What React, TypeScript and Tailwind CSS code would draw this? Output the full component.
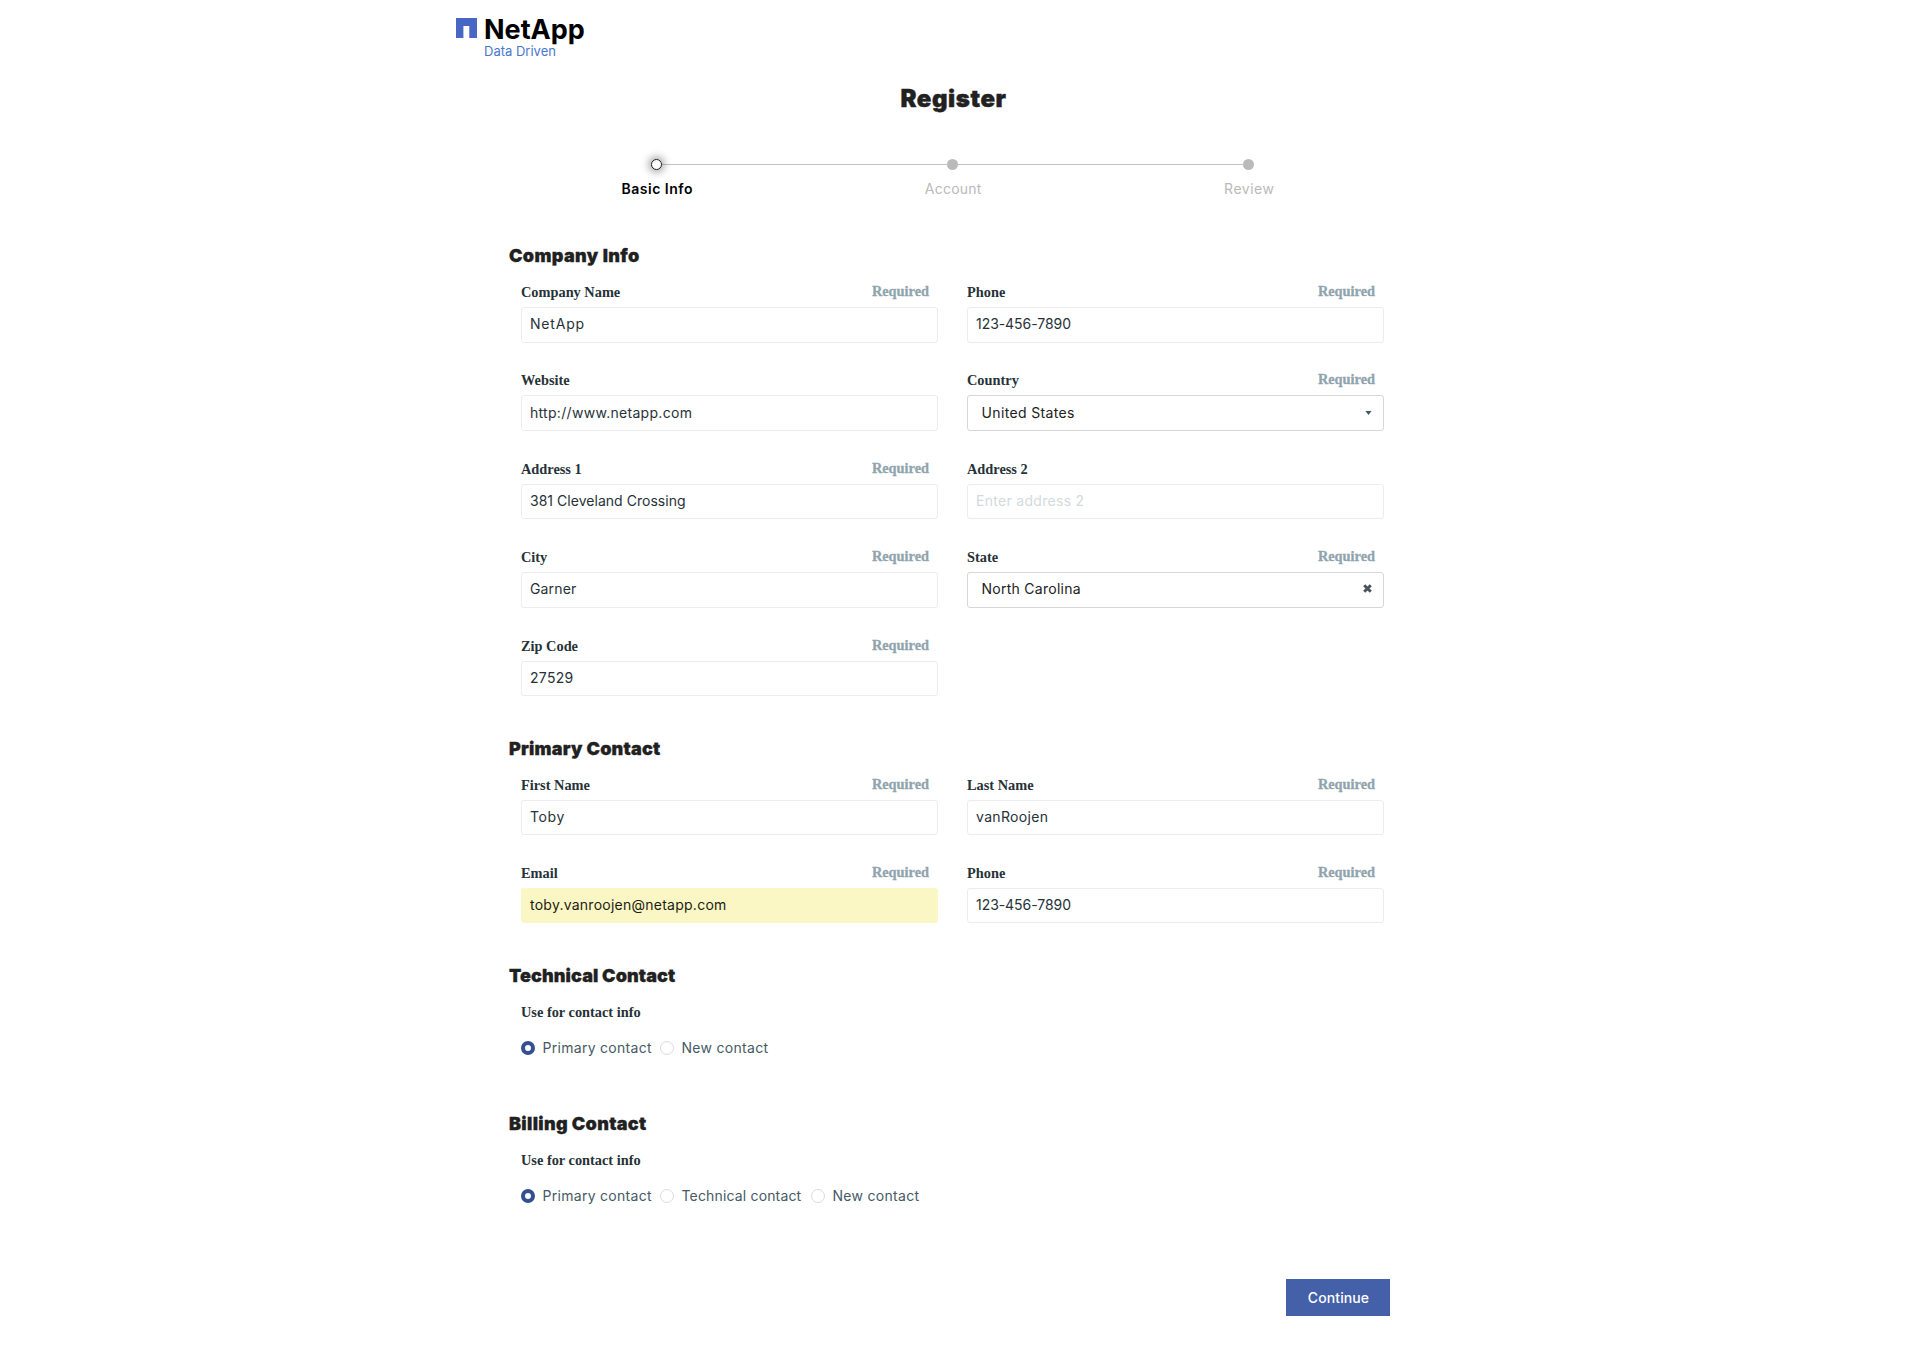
type FieldProps = {
  label: string
  value: string
  tracking?: string
  required?: boolean
  kind?: 'input' | 'select' | 'clearable' | 'placeholder' | 'autofill'
}

const boxStyles = {
  input: 'border-[#ebeced] bg-white pl-[8px] text-[#263238]',
  placeholder: 'border-[#ebeced] bg-white pl-[8px] text-[#d3dade]',
  autofill: 'border-[#faf7c4] bg-[#faf7c4] pl-[8px] text-[#1c1c14]',
  select: 'border-[#d5d7d8] bg-white pl-[13.5px] text-[#212121]',
  clearable: 'border-[#d5d7d8] bg-white pl-[13.5px] text-[#212121]',
}

function Label({ children }: { children: string }) {
  return (
    <span className="font-['Liberation_Serif',serif] text-[14.35px] leading-5 font-bold text-[#263238]">{children}</span>
  )
}

function Field({ label, value, tracking = 'tracking-[0.3px]', required = true, kind = 'input' }: FieldProps) {
  return (
    <div className="h-[88.4px]">
      <div className="flex h-5 justify-between pr-[9px]">
        <Label>{label}</Label>
        {required && (
          <span className="-mt-px font-['Liberation_Serif',serif] text-[14.35px] leading-5 font-bold text-[#90a4ae] [-webkit-text-stroke:0.3px_#90a4ae]">
            Required
          </span>
        )}
      </div>
      <div
        className={`mt-[5px] flex h-[35.6px] items-center justify-between rounded-[3px] border pr-[11px] pb-px text-sm ${boxStyles[kind]}`}
      >
        <span className={tracking}>{value}</span>
        {kind === 'select' && (
          <svg className="h-[4px] w-[7px]" viewBox="0 0 7 4" fill="#455a64">
            <path d="M0.4 0h6.2L3.5 4z" />
          </svg>
        )}
        {kind === 'clearable' && (
          <svg className="-mt-px h-[9px] w-[9px]" viewBox="0 0 9 9" stroke="#4a5559" strokeWidth="2.9">
            <path d="M1.2 1.2 7.8 7.8M7.8 1.2 1.2 7.8" />
          </svg>
        )}
      </div>
    </div>
  )
}

function Heading({ children, tracking }: { children: string; tracking: string }) {
  return (
    <h2 className={`ml-[-12px] h-6 text-[18px] leading-6 font-black text-[#212121] [-webkit-text-stroke:0.3px_#212121] ${tracking}`}>
      {children}
    </h2>
  )
}

function Radio({ label, checked = false, tracking, width }: { label: string; checked?: boolean; tracking: string; width: string }) {
  return (
    <label className={`flex h-5 shrink-0 items-center text-sm text-[#455a64] ${width}`}>
      <span
        className={
          checked
            ? 'size-[14px] shrink-0 rounded-full border-[4px] border-[#34508f] bg-white'
            : 'size-[14px] shrink-0 rounded-full border border-[#d9dcde] bg-white'
        }
      />
      <span className={`ml-[7.5px] whitespace-nowrap ${tracking}`}>{label}</span>
    </label>
  )
}

function Step({ label, active = false, tracking }: { label: string; active?: boolean; tracking: string }) {
  return (
    <div className="flex w-[296px] flex-col items-center">
      <span
        className={
          active
            ? 'relative size-[11px] rounded-full border-[1.5px] border-[#222] bg-white shadow-[0_0_8px_2px_rgba(0,0,0,0.4)]'
            : 'relative size-[11px] rounded-full bg-[#bababa]'
        }
      />
      <span className={`mt-[9px] pl-[1.5px] text-sm leading-5 ${tracking} ${active ? 'font-semibold text-black' : 'text-[#bababa]'}`}>
        {label}
      </span>
    </div>
  )
}

export default function App() {
  return (
    <div className="h-[1349px] overflow-hidden bg-white font-['Inter',sans-serif]">
      <header className="ml-[456px] flex h-[60px] pt-[18px]">
        <svg className="h-5 w-[21px]" viewBox="0 0 21 20" fill="#4867c5">
          <path d="M0 0H21V20H13.3V8H7.4V20H0z" />
        </svg>
        <div className="-mt-[2px] ml-[7px]">
          <div className="h-[27px] text-[27px] leading-[28px] font-bold text-black">NetApp</div>
          <div className="text-[13px] leading-4 text-[#4878cf]">Data Driven</div>
        </div>
      </header>

      <main className="ml-[521px] w-[863px]">
        <h1 className="mt-[24px] h-8 pl-[2px] text-center text-2xl leading-[30px] font-black tracking-[0.6px] text-[#212121] [-webkit-text-stroke:0.4px_#212121]">
          Register
        </h1>

        <div className="mt-[43px] ml-[-12.5px] h-[85px] w-[888px]">
          <div className="mx-[148px] mb-[-1px] h-px translate-y-[5px] bg-[#c3c3c3]" />
          <div className="flex">
            <Step label="Basic Info" active tracking="tracking-[0.5px]" />
            <Step label="Account" tracking="tracking-[0.23px]" />
            <Step label="Review" tracking="tracking-[0.5px]" />
          </div>
        </div>

        <section className="h-[492.5px]">
          <Heading tracking="tracking-[0.38px]">Company Info</Heading>
          <div className="mt-[14px] grid grid-cols-2 gap-x-[29px]">
            <Field label="Company Name" value="NetApp" tracking="tracking-[0.8px]" />
            <Field label="Phone" value="123-456-7890" tracking="tracking-[-0.05px]" />
            <Field label="Website" value="http://www.netapp.com" required={false} />
            <Field label="Country" value="United States" kind="select" tracking="tracking-[0.35px]" />
            <Field label="Address 1" value="381 Cleveland Crossing" tracking="tracking-[0.03px]" />
            <Field label="Address 2" value="Enter address 2" required={false} kind="placeholder" />
            <Field label="City" value="Garner" tracking="tracking-[0.15px]" />
            <Field label="State" value="North Carolina" kind="clearable" tracking="tracking-[0.27px]" />
            <Field label="Zip Code" value="27529" tracking="tracking-[0.3px]" />
          </div>
        </section>

        <section className="h-[227px]">
          <Heading tracking="tracking-[0.21px]">Primary Contact</Heading>
          <div className="mt-[14px] grid grid-cols-2 gap-x-[29px]">
            <Field label="First Name" value="Toby" tracking="tracking-[0.6px]" />
            <Field label="Last Name" value="vanRoojen" tracking="tracking-[0.33px]" />
            <Field label="Email" value="toby.vanroojen@netapp.com" kind="autofill" tracking="tracking-[0.25px]" />
            <Field label="Phone" value="123-456-7890" tracking="tracking-[-0.05px]" />
          </div>
        </section>

        <section className="flex h-[148px] flex-col">
          <Heading tracking="tracking-[0.1px]">Technical Contact</Heading>
          <div className="mt-[14px] flex h-5">
            <Label>Use for contact info</Label>
          </div>
          <div className="mt-[16px] flex">
            <Radio label="Primary contact" checked tracking="tracking-[0.29px]" width="w-[139px]" />
            <Radio label="New contact" tracking="tracking-[0.3px]" width="w-[120px]" />
          </div>
        </section>

        <section className="flex h-[167.5px] flex-col">
          <Heading tracking="tracking-[0.32px]">Billing Contact</Heading>
          <div className="mt-[14px] flex h-5">
            <Label>Use for contact info</Label>
          </div>
          <div className="mt-[16px] flex">
            <Radio label="Primary contact" checked tracking="tracking-[0.29px]" width="w-[139px]" />
            <Radio label="Technical contact" tracking="tracking-[0.16px]" width="w-[151px]" />
            <Radio label="New contact" tracking="tracking-[0.3px]" width="w-[120px]" />
          </div>
        </section>

        <div className="mr-[-6px] flex justify-end">
          <button className="h-[37px] w-[104px] bg-[#4360a8] pl-[1px] text-sm font-medium tracking-[0.1px] text-white">Continue</button>
        </div>
      </main>
    </div>
  )
}
